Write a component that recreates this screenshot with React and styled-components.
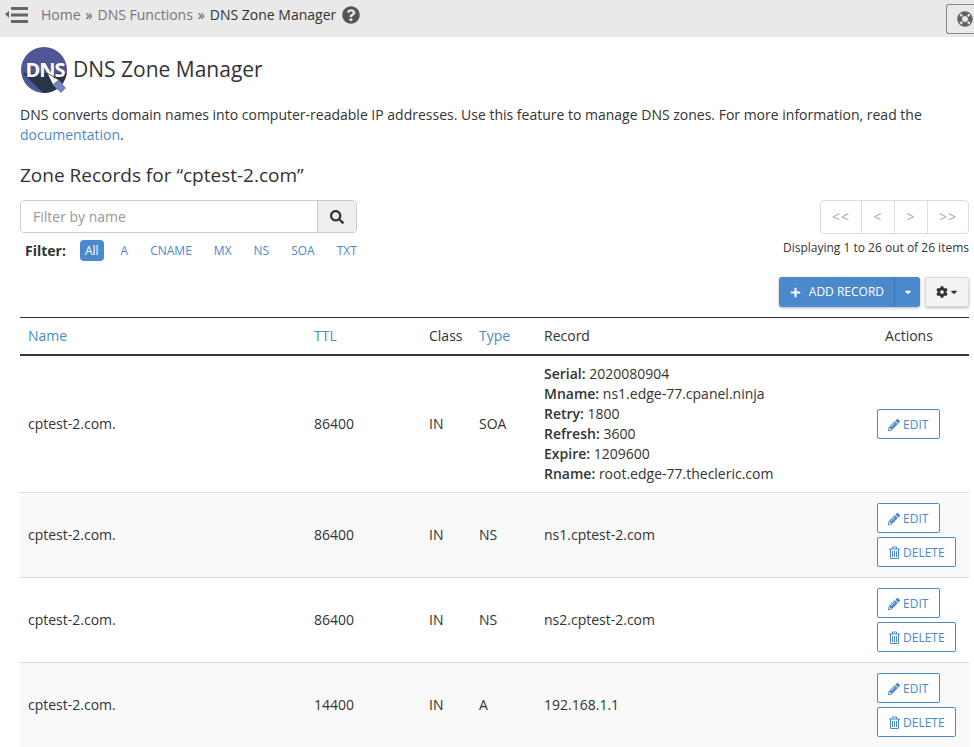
import React from 'react'
import styled, { createGlobalStyle } from 'styled-components'
import { FaQuestionCircle, FaLifeRing, FaSearch, FaPlus, FaCog, FaCaretDown, FaPencilAlt } from 'react-icons/fa'

const blue = '#4a89cc'

const GlobalStyle = createGlobalStyle`
  html, body { margin: 0; padding: 0; background: #fff; overflow: hidden; }
  body { font-family: "Open Sans", "Liberation Sans", sans-serif; font-size: 14px; line-height: 20px; color: #333; }
`

const Page = styled.div`
  width: 974px;
  height: 747px;
  overflow: hidden;
`

const TopBar = styled.div`
  display: flex;
  align-items: center;
  height: 37px;
  box-sizing: border-box;
  background: #e9e9e9;
  padding: 0 0 7px 5px;
`

const Burger = styled.svg`
  width: 24px;
  height: 18px;
  margin: 0 12px 0 0;
  color: #666;
`

const Crumb = styled.a`
  color: #777;
  margin-right: 5px;
`

const CrumbSep = styled.span`
  color: #555;
  margin-right: 5px;
`

const CrumbCurrent = styled.span`
  color: #333;
  margin-right: 6px;
`

const HelpIcon = styled(FaQuestionCircle)`
  width: 18px;
  height: 18px;
  color: #555;
`

const SupportBtn = styled.div`
  margin: 7px 0 0 auto;
  width: 28px;
  height: 30px;
  box-sizing: border-box;
  border: 1px solid #888;
  border-right: 0;
  border-radius: 3px 0 0 3px;
  display: flex;
  align-items: center;
  padding-left: 10px;
  color: #666;
  svg { width: 16px; height: 16px; flex: none; }
`

const Content = styled.div`
  padding: 8px 5px 0 20px;
`

const TitleRow = styled.div`
  display: flex;
  align-items: center;
  height: 50px;
  gap: 5px;
`

const Title = styled.h1`
  margin: 0;
  padding-bottom: 3px;
  font-size: 21px;
  font-weight: 400;
  line-height: 30px;
  color: #333;
`

const Intro = styled.p`
  margin: 10px 0 0;
  font-size: 14px;
  line-height: 20px;
  a { color: ${blue}; }
`

const SubTitle = styled.h2`
  margin: 18px 0 0;
  font-size: 19px;
  font-weight: 400;
  line-height: 24px;
  color: #333;
`

const Controls = styled.div`
  display: flex;
  justify-content: space-between;
  margin-top: 13px;
`

const FilterCol = styled.div`
  width: 337px;
`

const SearchGroup = styled.div`
  display: flex;
  height: 33px;
  box-sizing: border-box;
  border: 1px solid #ccc;
  border-radius: 4px;
  overflow: hidden;
`

const SearchInput = styled.input`
  flex: 1;
  min-width: 0;
  border: 0;
  outline: 0;
  padding: 0 12px;
  font: 14px "Open Sans", sans-serif;
  color: #333;
  &::placeholder { color: #999; opacity: 1; }
`

const SearchBtn = styled.div`
  width: 38px;
  background: #eee;
  border-left: 1px solid #ccc;
  display: flex;
  align-items: center;
  justify-content: center;
  color: #333;
  svg { width: 14px; height: 14px; }
`

const FilterRow = styled.div`
  display: flex;
  align-items: center;
  gap: 12px;
  margin-top: 6px;
  height: 23px;
  padding-left: 5px;
  font-size: 12px;
`

const FilterLabel = styled.strong`
  font-size: 14px;
  font-weight: 700;
  margin-right: 2px;
`

const FilterTag = styled.a`
  color: ${p => (p.$active ? '#fff' : blue)};
  background: ${p => (p.$active ? blue : 'transparent')};
  border-radius: 4px;
  padding: 0 5px;
  height: 21px;
  line-height: 21px;
`

const PagerCol = styled.div`
  display: flex;
  flex-direction: column;
  align-items: flex-end;
`

const Pager = styled.div`
  display: flex;
  height: 34px;
  box-sizing: border-box;
  border: 1px solid #ddd;
  border-radius: 4px;
`

const PagerBtn = styled.div`
  display: flex;
  align-items: center;
  justify-content: center;
  color: #aaa;
  font-size: 14px;
  letter-spacing: 1px;
  border-left: ${p => (p.$first ? '0' : '1px solid #ddd')};
  width: ${p => (p.$wide ? '40px' : '32px')};
`

const ItemCount = styled.div`
  margin-top: 4px;
  font-size: 12px;
  line-height: 20px;
`

const ActionBar = styled.div`
  display: flex;
  justify-content: flex-end;
  gap: 5px;
  margin-top: 15px;
`

const SplitButton = styled.div`
  display: flex;
  height: 30px;
  background: ${blue};
  color: #fff;
  border-radius: 3px;
  box-shadow: 0 1px 3px rgba(0,0,0,.3);
  font-size: 12px;
`

const SplitMain = styled.div`
  display: flex;
  align-items: center;
  gap: 8px;
  padding: 0 10px 0 11px;
  svg { width: 11px; height: 11px; }
`

const SplitCaret = styled.div`
  width: 25px;
  border-left: 1px solid #3d77b6;
  display: flex;
  align-items: center;
  justify-content: center;
  svg { width: 10px; height: 10px; }
`

const GearButton = styled.div`
  width: 44px;
  height: 30px;
  box-sizing: border-box;
  background: #f3f3f3;
  border: 1px solid #ddd;
  border-radius: 3px;
  box-shadow: 0 1px 3px rgba(0,0,0,.3);
  display: flex;
  align-items: center;
  justify-content: center;
  color: #333;
  gap: 1px;
  svg:first-child { width: 12px; height: 12px; }
  svg:last-child { width: 10px; height: 10px; }
`

const Table = styled.table`
  width: 949px;
  margin-top: 10px;
  border-collapse: collapse;
  table-layout: fixed;
  border-top: 1px solid #333;
  font-size: 14px;
`

const Th = styled.th`
  height: 36px;
  padding: 0 8px;
  text-align: ${p => p.$align || 'left'};
  font-weight: 400;
  color: ${p => (p.$link ? blue : '#333')};
  border-bottom: 2px solid #333;
`

const Row = styled.tr`
  background: ${p => (p.$shaded ? '#f9f9f9' : '#fff')};
  border-bottom: 1px solid #ddd;
`

const Td = styled.td`
  padding: 8px;
  height: 68px;
  vertical-align: middle;
`

const ActionCell = styled(Td)`
  padding: 0;
`

const ActionStack = styled.div`
  display: flex;
  flex-direction: column;
  align-items: flex-start;
  gap: 4px;
  margin-left: 28px;
`

const OutlineBtn = styled.div`
  display: inline-flex;
  align-items: center;
  gap: 3px;
  height: 30px;
  box-sizing: border-box;
  padding: 1px ${p => (p.$trash ? '10px' : '11px')} 0 ${p => (p.$trash ? '11px' : '10px')};
  background: #fff;
  border: 1px solid ${blue};
  border-radius: 2px;
  color: ${blue};
  font-size: 12px;
  svg { width: ${p => (p.$trash ? '11px' : '12px')}; height: ${p => (p.$trash ? '13px' : '12px')}; }
`

const SoaField = styled.div`
  line-height: 20px;
  strong { font-weight: 600; }
`

const TrashIcon = () => (
  <svg viewBox="0 0 11 13" fill="none" stroke="currentColor" strokeWidth="1">
    <path d="M0 3 H11 M3.5 3 V1 H7.5 V3 M1.5 3 V12.5 H9.5 V3 M3.5 5 V11 M5.5 5 V11 M7.5 5 V11" />
  </svg>
)

const DnsLogo = () => (
  <svg width="48" height="48" viewBox="0 0 48 48">
    <defs>
      <clipPath id="logoClip"><circle cx="24" cy="24" r="23" /></clipPath>
    </defs>
    <circle cx="24" cy="24" r="23" fill="#4f5596" />
    <path d="M3 27 L48 27 L48 48 L24 48 Z" fill="#253746" clipPath="url(#logoClip)" />
    <text x="25" y="31" textAnchor="middle" fontFamily="Open Sans, sans-serif" fontWeight="700" fontSize="20" letterSpacing="-1" fill="#fff">DNS</text>
    <path d="M27 27 L39 34 L33 39 Z" fill="#fff" stroke="#253746" strokeWidth="0.8" />
    <path d="M33 39 L39 34 L46 42 L41 47 Z" fill="#7b82c4" />
  </svg>
)

const records = [
  { name: 'cptest-2.com.', ttl: 86400, type: 'NS', record: 'ns1.cptest-2.com' },
  { name: 'cptest-2.com.', ttl: 86400, type: 'NS', record: 'ns2.cptest-2.com' },
  { name: 'cptest-2.com.', ttl: 14400, type: 'A', record: '192.168.1.1' },
]

const soa = [
  ['Serial', '2020080904'],
  ['Mname', 'ns1.edge-77.cpanel.ninja'],
  ['Retry', '1800'],
  ['Refresh', '3600'],
  ['Expire', '1209600'],
  ['Rname', 'root.edge-77.thecleric.com'],
]

const filters = ['All', 'A', 'CNAME', 'MX', 'NS', 'SOA', 'TXT']

export default function App() {
  return (
    <Page>
      <GlobalStyle />
      <TopBar>
        <Burger viewBox="0 0 24 18">
          <path d="M0 8 L4 5 V12 Z" fill="currentColor" />
          <rect x="6" y="1" width="17" height="3" fill="currentColor" />
          <rect x="6" y="7.5" width="17" height="3" fill="currentColor" />
          <rect x="6" y="14" width="17" height="3" fill="currentColor" />
        </Burger>
        <Crumb>Home</Crumb><CrumbSep>»</CrumbSep>
        <Crumb>DNS Functions</Crumb><CrumbSep>»</CrumbSep>
        <CrumbCurrent>DNS Zone Manager</CrumbCurrent>
        <HelpIcon />
        <SupportBtn><FaLifeRing /></SupportBtn>
      </TopBar>
      <Content>
        <TitleRow>
          <DnsLogo />
          <Title>DNS Zone Manager</Title>
        </TitleRow>
        <Intro>
          DNS converts domain names into computer-readable IP addresses. Use this feature to manage DNS zones. For more information, read the <a>documentation</a>.
        </Intro>
        <SubTitle>Zone Records for “cptest-2.com”</SubTitle>
        <Controls>
          <FilterCol>
            <SearchGroup>
              <SearchInput placeholder="Filter by name" />
              <SearchBtn><FaSearch /></SearchBtn>
            </SearchGroup>
            <FilterRow>
              <FilterLabel>Filter:</FilterLabel>
              {filters.map(f => (
                <FilterTag key={f} $active={f === 'All'}>{f}</FilterTag>
              ))}
            </FilterRow>
          </FilterCol>
          <PagerCol>
            <Pager>
              <PagerBtn $first $wide>&lt;&lt;</PagerBtn>
              <PagerBtn>&lt;</PagerBtn>
              <PagerBtn>&gt;</PagerBtn>
              <PagerBtn $wide>&gt;&gt;</PagerBtn>
            </Pager>
            <ItemCount>Displaying 1 to 26 out of 26 items</ItemCount>
          </PagerCol>
        </Controls>
        <ActionBar>
          <SplitButton>
            <SplitMain><FaPlus />ADD RECORD</SplitMain>
            <SplitCaret><FaCaretDown /></SplitCaret>
          </SplitButton>
          <GearButton><FaCog /><FaCaretDown /></GearButton>
        </ActionBar>
        <Table>
          <colgroup>
            <col style={{ width: 286 }} />
            <col style={{ width: 115 }} />
            <col style={{ width: 50 }} />
            <col style={{ width: 65 }} />
            <col style={{ width: 313 }} />
            <col style={{ width: 120 }} />
          </colgroup>
          <thead>
            <tr>
              <Th $link>Name</Th>
              <Th $link>TTL</Th>
              <Th>Class</Th>
              <Th $link>Type</Th>
              <Th>Record</Th>
              <Th $align="center">Actions</Th>
            </tr>
          </thead>
          <tbody>
            <Row>
              <Td>cptest-2.com.</Td>
              <Td>86400</Td>
              <Td>IN</Td>
              <Td>SOA</Td>
              <Td>
                {soa.map(([k, v]) => (
                  <SoaField key={k}><strong>{k}:</strong> {v}</SoaField>
                ))}
              </Td>
              <ActionCell>
                <ActionStack>
                  <OutlineBtn><FaPencilAlt />EDIT</OutlineBtn>
                </ActionStack>
              </ActionCell>
            </Row>
            {records.map((r, i) => (
              <Row key={i} $shaded={i % 2 === 0}>
                <Td>{r.name}</Td>
                <Td>{r.ttl}</Td>
                <Td>IN</Td>
                <Td>{r.type}</Td>
                <Td>{r.record}</Td>
                <ActionCell>
                  <ActionStack>
                    <OutlineBtn><FaPencilAlt />EDIT</OutlineBtn>
                    <OutlineBtn $trash><TrashIcon />DELETE</OutlineBtn>
                  </ActionStack>
                </ActionCell>
              </Row>
            ))}
          </tbody>
        </Table>
      </Content>
    </Page>
  )
}
